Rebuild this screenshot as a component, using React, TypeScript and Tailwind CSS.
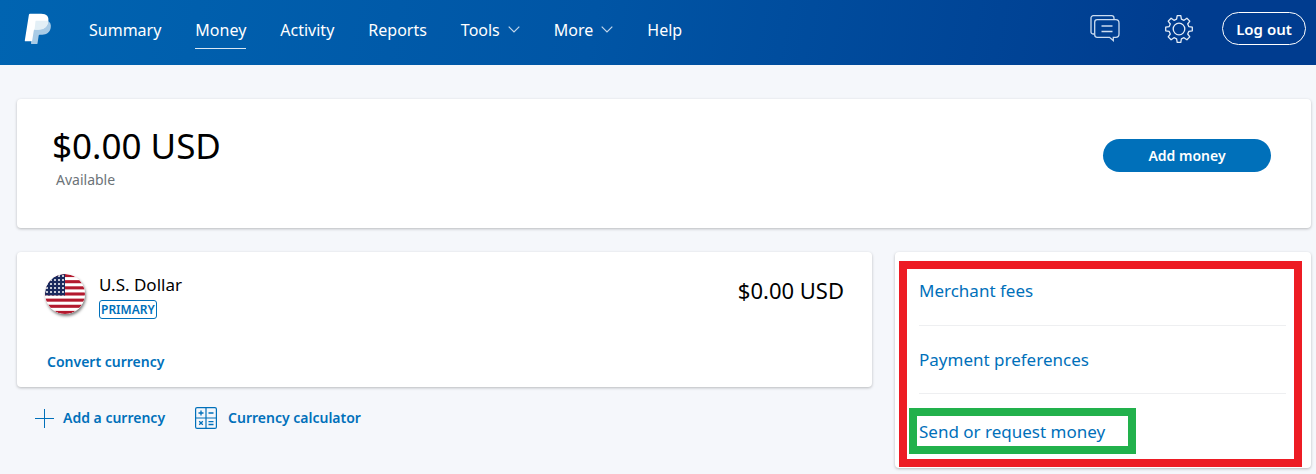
import React from "react";

interface NavItem {
  label: string;
  active?: boolean;
  menu?: boolean;
}

const navItems: NavItem[] = [
  { label: "Summary" },
  { label: "Money", active: true },
  { label: "Activity" },
  { label: "Reports" },
  { label: "Tools", menu: true },
  { label: "More", menu: true },
  { label: "Help" },
];

function PayPalLogo() {
  return (
    <svg width="28" height="32" viewBox="0 0 28 32" aria-hidden="true">
      <path d="M9 8h14.500c2.800 1 3.900 3.600 3.200 7.100-.9 4.500-4.100 6.600-8.400 6.600h-2.600c-.6 0-.9.3-1 .9l-1.200 7.800c-.1.400-.4.600-.8.600H7.600c-.5 0-.7-.3-.6-.7z" fill="#a9cbe6" />
      <path d="M6 .700h11.200c5.500 0 8.100 2.800 7 8.100-1.100 5.700-4.700 7.600-9.800 7.600h-3.500c-.6 0-1 .3-1.100 1L8.200 27.600c-.1.500-.3.700-.8.700H1.500c-.6 0-.8-.3-.7-.9L4.900 1.800c.1-.7.500-1.100 1.100-1.100z" fill="#fff" />
      <path d="M11.800 7.800h12.500c-.4 6.300-4.300 8.900-9.900 8.900h-3.900l1-8.400c0-.3.100-.5.300-.5z" fill="#e3eff6" />
    </svg>
  );
}

function ChevronDown() {
  return (
    <svg width="12" height="7" viewBox="0 0 12 7" fill="none" stroke="#c3d7ec" strokeWidth="1.200" aria-hidden="true">
      <path d="M.7.700 6 6 11.300.7" />
    </svg>
  );
}

function MessagesIcon() {
  return (
    <svg width="30" height="27" viewBox="0 0 30 27" fill="none" stroke="#cbdcf0" strokeWidth="1.300" aria-hidden="true">
      <path d="M4 19H3a2 2 0 0 1-2-2V3a2.300 2.300 0 0 1 2.300-2.300h18.400A2.300 2.300 0 0 1 24 3v1.500" />
      <path d="M7.200 4.700h18.600C28 4.700 29 6 29 8v11c0 2-1 3.300-3.200 3.300h-2.500v3.200l-3.800-3.200H7.200c-1.500 0-2.500-1-2.500-2.500V7.200c0-1.500 1-2.500 2.500-2.500z" />
      <path d="M11.500 11h11M11.500 16.500h11" />
    </svg>
  );
}

function GearIcon() {
  return (
    <svg width="28" height="28" viewBox="0 0 28 28" fill="none" stroke="#e3ecf7" strokeWidth="1.300" strokeLinejoin="round" aria-hidden="true">
      <path d="M12.200.7h3.600l.6 3.500 2.600 1.100 2.900-2.100 2.900 2.900L22.700 9l1.100 2.600 3.500.6v3.600l-3.500.6-1.100 2.600 2.100 2.900-2.900 2.900-2.900-2.100-2.600 1.100-.6 3.500h-3.600l-.6-3.500L9 22.700l-2.900 2.100-2.900-2.900L5.300 19l-1.100-2.600-3.500-.6v-3.600l3.500-.6L5.300 9 3.200 6.100l2.900-2.900L9 5.300l2.600-1.100z" />
      <circle cx="14" cy="14" r="5.800" />
    </svg>
  );
}

function UsFlag() {
  return (
    <svg width="40" height="40" viewBox="0 0 40 40" className="rounded-full shadow-[1px_2px_3px_rgba(0,0,0,0.5)]" role="img" aria-label="United States">
      <defs>
        <clipPath id="flag-circle">
          <circle cx="20" cy="20" r="20" />
        </clipPath>
        <pattern id="flag-stars" width="4" height="4" patternUnits="userSpaceOnUse">
          <circle cx="2" cy="2" r="1" fill="#fff" />
        </pattern>
      </defs>
      <g clipPath="url(#flag-circle)">
        <rect width="40" height="40" fill="#fff" />
        {[0, 1, 2, 3, 4, 5, 6].map((i) => (
          <rect key={i} y={i * 6.15} width="40" height="3.080" fill="#b3192e" />
        ))}
        <rect width="20" height="21.500" fill="#1a2a5e" />
        <rect width="20" height="21.500" fill="url(#flag-stars)" />
      </g>
    </svg>
  );
}

function PlusIcon() {
  return (
    <svg width="19" height="19" viewBox="0 0 19 19" fill="none" stroke="#0070ba" aria-hidden="true">
      <path d="M9.500 0v19M0 9.500h19" />
    </svg>
  );
}

function CalculatorIcon() {
  return (
    <svg width="22" height="22" viewBox="0 0 22 22" fill="none" stroke="#0070ba" aria-hidden="true">
      <rect x="0.600" y="0.600" width="20.800" height="20.800" rx="1.500" strokeWidth="1.200" />
      <path d="M11 .5v21M.5 11h21" strokeWidth="1.200" />
      <path d="M3.500 6h5M6 3.500v5M13.500 6h5M4.200 14.200l3.600 3.600M7.800 14.200l-3.600 3.600M13.500 14.700h5M13.500 17.500h5" strokeWidth="1.300" />
    </svg>
  );
}

const card = "rounded bg-white shadow-[0_1px_3px_rgba(0,0,0,0.25)]";

export default function App() {
  return (
    <div className="min-h-screen bg-[#f5f7fb] font-['Noto_Sans',sans-serif] text-black">
      <header className="flex h-[65px] items-center bg-linear-[100deg,#0064b1_0%,#0055a5_45%,#003c8f_90%] pr-[10px] pl-6 text-white">
        <a href="#" aria-label="PayPal" className="pb-[7px]">
          <PayPalLogo />
        </a>

        <nav className="ml-[37px] flex gap-[34px] pb-[10px]">
          {navItems.map((item) => (
            <a
              key={item.label}
              href="#"
              className={`flex items-center gap-2 border-b pt-[9px] pb-1 text-base leading-7 ${
                item.active ? "border-[#dbe7f3]" : "border-transparent"
              }`}
            >
              {item.label}
              {item.menu && <ChevronDown />}
            </a>
          ))}
        </nav>

        <div className="ml-auto flex items-center pb-2">
          <button type="button" aria-label="Messages">
            <MessagesIcon />
          </button>
          <button type="button" aria-label="Settings" className="ml-[45px]">
            <GearIcon />
          </button>
          <button type="button" className="ml-[29px] h-[33px] w-[84px] rounded-full border border-white pt-px text-[15px] font-semibold">
            Log out
          </button>
        </div>
      </header>

      <main className="pt-[34px] pr-[5px] pb-1 pl-[17px]">
        {/* Balance */}
        <section className={`flex h-[129px] items-start justify-between pr-10 pl-[35px] ${card}`}>
          <div className="pt-[27px]">
            <h1 className="text-[35px] leading-10">$0.00 USD</h1>
            <p className="pl-1 text-sm leading-7 text-[#6c7378]">Available</p>
          </div>
          <button type="button" className="mt-10 h-[33px] w-[168px] rounded-full bg-[#0070ba] text-sm font-semibold text-white">
            Add money
          </button>
        </section>

        <div className="mt-6 flex items-start gap-[23px]">
          <div className="flex-1">
            <section className={`h-[135px] pt-[22px] pr-7 pl-7 ${card}`}>
              <div className="flex items-start">
                <UsFlag />
                <div className="ml-[14px]">
                  <h2 className="text-[17px] leading-[22px]">U.S. Dollar</h2>
                  <span className="mt-1 flex h-[19px] w-fit items-center rounded-[3px] border border-[#0070ba] px-px text-xs font-semibold text-[#0070ba]">
                    PRIMARY
                  </span>
                </div>
                <span className="ml-auto text-[22px] leading-8">$0.00 USD</span>
              </div>
              <a href="#" className="mt-[33px] inline-block pl-[2px] text-sm font-semibold text-[#0070ba]">
                Convert currency
              </a>
            </section>

            <div className="mt-5 flex items-center pl-[18px] text-sm font-semibold text-[#0070ba]">
              <a href="#" className="flex items-center gap-[9px]">
                <PlusIcon />
                Add a currency
              </a>
              <a href="#" className="ml-[30px] flex items-center gap-[11px]">
                <CalculatorIcon />
                Currency calculator
              </a>
            </div>
          </div>

          <aside className={`relative h-[216px] w-[416px] pt-[5px] pr-[25px] pl-6 ${card}`}>
            <ul className="text-[17px] text-[#0070ba]">
              <li className="flex h-[69px] items-center border-b border-[#eeeff1]">
                <a href="#">Merchant fees</a>
              </li>
              <li className="flex h-[68px] items-center border-b border-[#eeeff1]">
                <a href="#">Payment preferences</a>
              </li>
              <li className="flex h-[76px] items-center">
                <a href="#">Send or request money</a>
              </li>
            </ul>
            {/* Callout frames */}
            <div className="pointer-events-none absolute top-[9px] right-[9px] bottom-px left-1 border-8 border-[#ed1c24]" />
            <div className="pointer-events-none absolute top-[156px] left-[14px] h-[46px] w-[227px] border-8 border-[#22b14c]" />
          </aside>
        </div>
      </main>
    </div>
  );
}
